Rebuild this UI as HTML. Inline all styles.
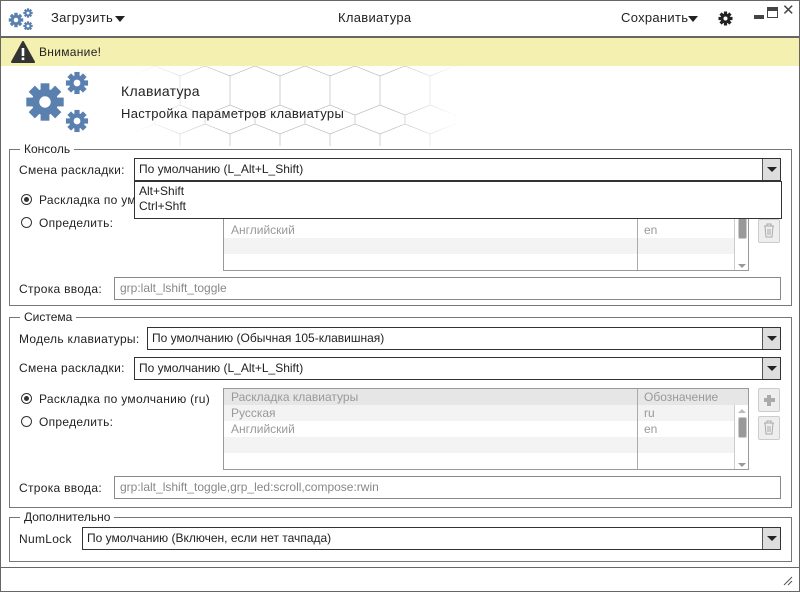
<!DOCTYPE html>
<html><head><meta charset="utf-8"><style>
*{box-sizing:border-box;margin:0;padding:0}
body{width:800px;height:592px;overflow:hidden;background:#fff;font-family:"Liberation Sans","DejaVu Sans",sans-serif;font-size:12px;color:#222;position:relative}
.a{position:absolute}
.win{left:0;top:0;width:800px;height:592px;border:1px solid #666}
.t{white-space:nowrap;line-height:14px}
.fs{border:1px solid #777}
.lg{background:#fff;padding:0 4px}
.cb{border:1px solid #333;background:#fff;padding-left:4px;line-height:21px;height:23px}
.cb .btn{position:absolute;right:0;top:0;width:18px;height:21px;background:#ddd;border-left:1px solid #555}
.cb .btn:after{content:"";position:absolute;left:4px;top:8px;border-left:5px solid transparent;border-right:5px solid transparent;border-top:5px solid #222}
.in{border:1px solid #888;color:#888;padding-left:5px;line-height:21px;height:23px}
.rad{width:11px;height:11px;border:1px solid #333;border-radius:50%}
.rad.on:after{content:"";position:absolute;left:2px;top:2px;width:5px;height:5px;border-radius:50%;background:#333}
.tbl{border:1px solid #999;background:#fff;color:#999;overflow:hidden}
.row{position:absolute;left:0;height:16px;line-height:16px;padding-left:7px}
.sb{border:1px solid #ccc;background:#eee;border-radius:2px}
.w{letter-spacing:0.3px}
</style></head><body>
<div class="a win"></div>
<svg class="a" style="left:8px;top:8px" width="30" height="22" viewBox="0 0 30 22">
<defs><g id="g"><circle r="6" fill="#5a80b0"/><g fill="#5a80b0"><rect x="-2" y="-8.5" width="4" height="17"/><rect x="-2" y="-8.5" width="4" height="17" transform="rotate(45)"/><rect x="-2" y="-8.5" width="4" height="17" transform="rotate(90)"/><rect x="-2" y="-8.5" width="4" height="17" transform="rotate(135)"/></g><circle r="2.6" fill="#fff"/></g></defs>
<use href="#g" transform="translate(8,12) scale(0.85)"/><use href="#g" transform="translate(20,5) scale(0.55)"/><use href="#g" transform="translate(20,18) scale(0.55)"/>
</svg>
<div class="a t w" style="left:51px;top:11px;font-size:13px">Загрузить</div>
<div class="a" style="left:115px;top:16px;border-left:5px solid transparent;border-right:5px solid transparent;border-top:6px solid #222"></div>
<div class="a t w" style="left:338px;top:11px;font-size:13px">Клавиатура</div>
<div class="a t w" style="left:621px;top:11px;font-size:13px">Сохранить</div>
<div class="a" style="left:688px;top:16px;border-left:5px solid transparent;border-right:5px solid transparent;border-top:6px solid #222"></div>
<svg class="a" style="left:718px;top:11px" width="15" height="15" viewBox="-7.5 -7.5 15 15"><circle r="5" fill="#222"/><g fill="#222"><rect x="-1.6" y="-7" width="3.2" height="14"/><rect x="-1.6" y="-7" width="3.2" height="14" transform="rotate(45)"/><rect x="-1.6" y="-7" width="3.2" height="14" transform="rotate(90)"/><rect x="-1.6" y="-7" width="3.2" height="14" transform="rotate(135)"/></g><circle r="2" fill="#fff"/></svg>
<div class="a" style="left:754px;top:15px;width:10px;height:4px;background:#444"></div>
<div class="a" style="left:767px;top:7px;width:11px;height:11px;border:1.5px solid #444;border-top:4px solid #444"></div>
<div class="a t" style="left:782px;top:4px;font-size:15px;color:#444">✕</div>
<div class="a" style="left:1px;top:36px;width:798px;height:2px;background:#666"></div>
<div class="a" style="left:1px;top:38px;width:798px;height:28px;background:#f3f0b0"></div>
<svg class="a" style="left:11px;top:41px" width="24" height="22" viewBox="0 0 24 22"><path d="M12 1 L23 21 L1 21 Z" fill="#333" stroke="#333" stroke-linejoin="round" stroke-width="2"/><rect x="10.7" y="7" width="2.6" height="8" fill="#fff"/><rect x="10.7" y="16.5" width="2.6" height="2.6" fill="#fff"/></svg>
<div class="a t w" style="left:39px;top:45px">Внимание!</div>
<svg class="a" style="left:130px;top:66px" width="330" height="80">
<defs><pattern id="hx" width="50" height="58" patternUnits="userSpaceOnUse"><path d="M0 10 L25 0 L50 10 M25 0 L25 -19 M0 10 L0 39 L25 49 L50 39 L50 10 M25 49 L25 68" fill="none" stroke="#aaa" stroke-width="0.6"/></pattern>
<linearGradient id="fd"><stop offset="0" stop-color="#fff" stop-opacity="1"/><stop offset="0.3" stop-color="#fff" stop-opacity="0.1"/><stop offset="0.8" stop-color="#fff" stop-opacity="0.1"/><stop offset="1" stop-color="#fff" stop-opacity="1"/></linearGradient></defs>
<rect width="330" height="80" fill="url(#hx)"/><rect width="330" height="80" fill="url(#fd)"/></svg>
<svg class="a" style="left:22px;top:70px" width="75" height="68">
<use href="#g" transform="translate(23,32) scale(2.2)"/><use href="#g" transform="translate(55,13) scale(1.3)"/><use href="#g" transform="translate(55,51) scale(1.3)"/></svg>
<div class="a t w" style="left:121px;top:84px;font-size:14px">Клавиатура</div>
<div class="a t w" style="left:121px;top:107px;font-size:13px">Настройка параметров клавиатуры</div>

<div class="a fs" style="left:9px;top:149px;width:783px;height:157px"></div>
<div class="a t lg" style="left:20px;top:142px">Консоль</div>
<div class="a t w" style="left:19px;top:163px">Смена раскладки:</div>
<div class="a cb" style="left:134px;top:158px;width:647px">По умолчанию (L_Alt+L_Shift)<div class="btn"></div></div>
<div class="a rad on" style="left:21px;top:194px"></div>
<div class="a t w" style="left:39px;top:193px">Раскладка по умолчанию</div>
<div class="a rad" style="left:21px;top:217px"></div>
<div class="a t w" style="left:39px;top:216px">Определить:</div>
<div class="a tbl" style="left:223px;top:205px;width:526px;height:66px">
 <div class="row" style="top:16px;width:100%">Английский</div>
 <div class="a" style="left:0;top:32px;width:510px;height:16px;background:#f3f3f3"></div>
 <div class="a" style="left:413px;top:0;width:1px;height:66px;background:#aaa"></div>
 <div class="row" style="left:413px;top:16px">en</div>
 <div class="a" style="left:510px;top:0;width:1px;height:66px;background:#ccc"></div>
 <div class="a sb" style="left:514px;top:8px;width:9px;height:25px;background:#999"></div>
 <div class="a" style="left:514px;top:58px;border-left:4px solid transparent;border-right:4px solid transparent;border-top:4px solid #999"></div>
</div>
<div class="a sb" style="left:758px;top:219px;width:22px;height:24px"></div>
<svg class="a" style="left:763px;top:223px" width="12" height="15"><path d="M1 3h10M4 3V1h4v2M2 3l1 11h6l1-11M5 6v6M7 6v6" stroke="#aaa" fill="none"/></svg>
<div class="a cb" style="left:134px;top:181px;width:648px;height:38px;line-height:15px;padding-top:2px">Alt+Shift<br>Ctrl+Shft</div>
<div class="a t w" style="left:19px;top:282px">Строка ввода:</div>
<div class="a in" style="left:114px;top:277px;width:667px">grp:lalt_lshift_toggle</div>

<div class="a fs" style="left:9px;top:317px;width:783px;height:191px"></div>
<div class="a t lg" style="left:20px;top:310px">Система</div>
<div class="a t w" style="left:19px;top:332px">Модель клавиатуры:</div>
<div class="a cb" style="left:147px;top:327px;width:634px">По умолчанию (Обычная 105-клавишная)<div class="btn"></div></div>
<div class="a t w" style="left:19px;top:361px">Смена раскладки:</div>
<div class="a cb" style="left:134px;top:357px;width:647px">По умолчанию (L_Alt+L_Shift)<div class="btn"></div></div>
<div class="a rad on" style="left:21px;top:393px"></div>
<div class="a t w" style="left:39px;top:392px">Раскладка по умолчанию (ru)</div>
<div class="a rad" style="left:21px;top:416px"></div>
<div class="a t w" style="left:39px;top:415px">Определить:</div>
<div class="a tbl" style="left:223px;top:388px;width:526px;height:82px">
 <div class="a" style="left:0;top:0;width:100%;height:16px;background:#e6e6e6"></div>
 <div class="row" style="top:0">Раскладка клавиатуры</div>
 <div class="a" style="left:0;top:16px;width:510px;height:16px;background:#f3f3f3"></div>
 <div class="row" style="top:16px">Русская</div>
 <div class="row" style="top:32px">Английский</div>
 <div class="a" style="left:0;top:48px;width:510px;height:16px;background:#f3f3f3"></div>
 <div class="a" style="left:413px;top:0;width:1px;height:82px;background:#aaa"></div>
 <div class="row" style="left:413px;top:0">Обозначение</div>
 <div class="row" style="left:413px;top:16px">ru</div>
 <div class="row" style="left:413px;top:32px">en</div>
 <div class="a" style="left:510px;top:16px;width:15px;height:66px;background:#fff;border-left:1px solid #ccc"></div>
 <div class="a" style="left:514px;top:20px;border-left:4px solid transparent;border-right:4px solid transparent;border-bottom:4px solid #bbb"></div>
 <div class="a sb" style="left:514px;top:28px;width:9px;height:21px;background:#999"></div>
 <div class="a" style="left:514px;top:74px;border-left:4px solid transparent;border-right:4px solid transparent;border-top:4px solid #999"></div>
</div>
<div class="a sb" style="left:758px;top:388px;width:22px;height:24px"></div>
<div class="a" style="left:764px;top:398px;width:11px;height:4px;background:#aaa"></div>
<div class="a" style="left:767px;top:395px;width:4px;height:11px;background:#aaa"></div>
<div class="a sb" style="left:758px;top:416px;width:22px;height:24px"></div>
<svg class="a" style="left:763px;top:420px" width="12" height="15"><path d="M1 3h10M4 3V1h4v2M2 3l1 11h6l1-11M5 6v6M7 6v6" stroke="#aaa" fill="none"/></svg>
<div class="a t w" style="left:19px;top:481px">Строка ввода:</div>
<div class="a in" style="left:114px;top:476px;width:667px">grp:lalt_lshift_toggle,grp_led:scroll,compose:rwin</div>

<div class="a fs" style="left:9px;top:517px;width:783px;height:45px"></div>
<div class="a t lg" style="left:20px;top:510px">Дополнительно</div>
<div class="a t w" style="left:19px;top:532px">NumLock</div>
<div class="a cb" style="left:82px;top:527px;width:699px">По умолчанию (Включен, если нет тачпада)<div class="btn"></div></div>
<div class="a" style="left:1px;top:567px;width:798px;height:1px;background:#666"></div>
<svg class="a" style="left:783px;top:576px" width="10" height="10"><path d="M1 9L9 1M5 9L9 5" stroke="#555"/></svg>
</body></html>
